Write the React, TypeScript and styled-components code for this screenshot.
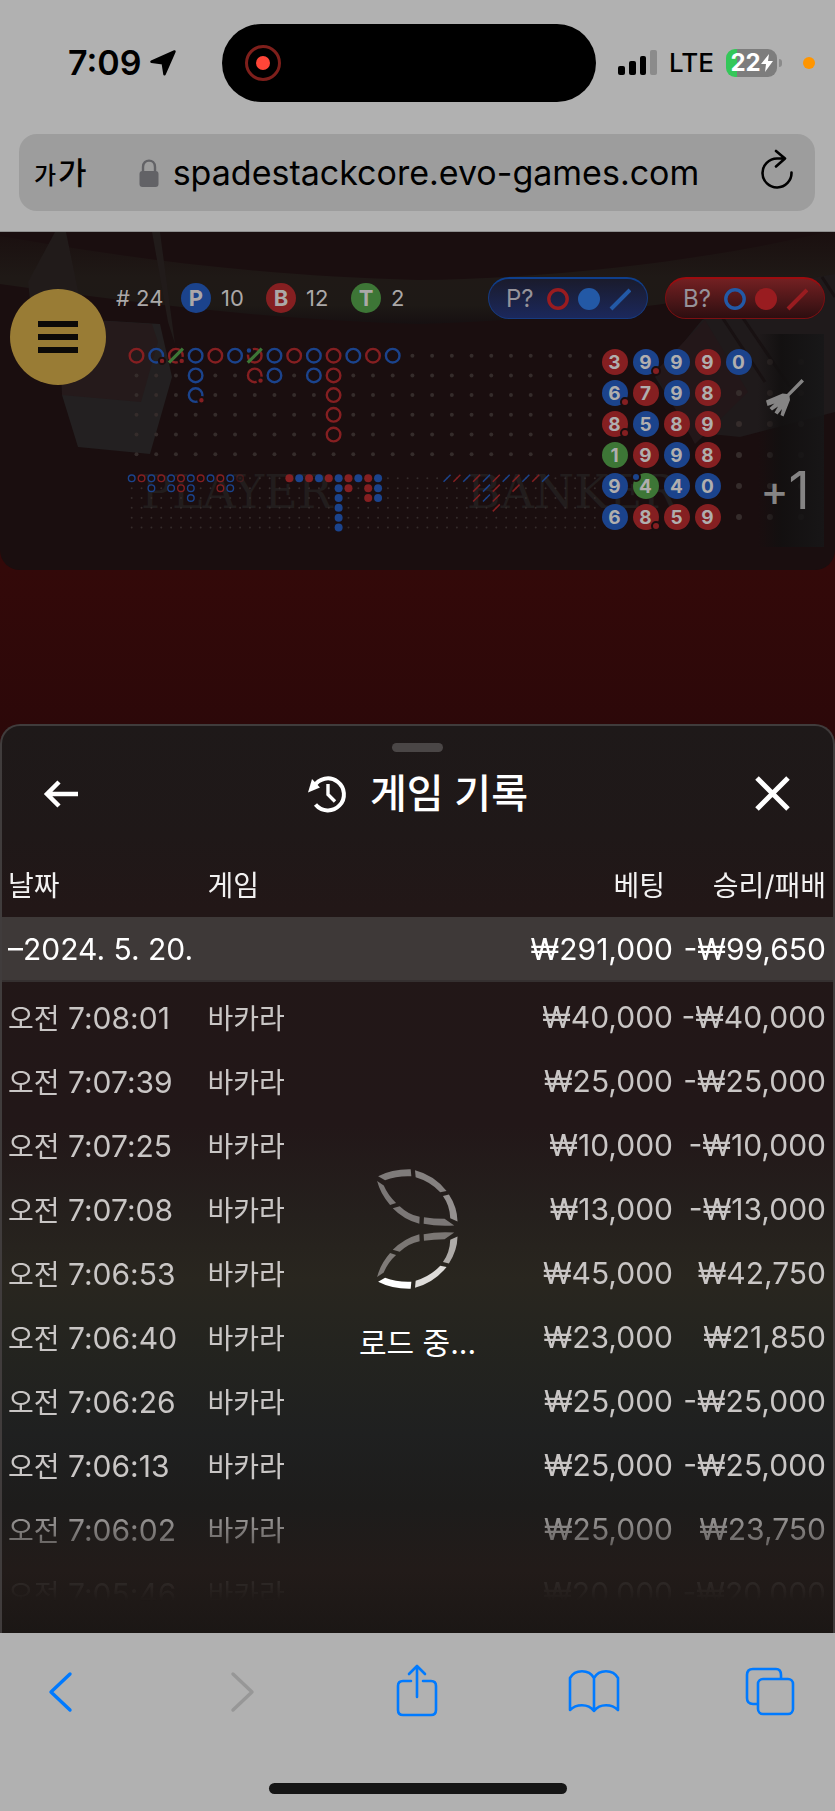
import React from 'react';
import styled, { createGlobalStyle } from 'styled-components';

const palette = {
  red: '#851f21',
  blue: '#1b438c',
  green: '#3d7636',
  dot: '#352c2b',
  chrome: '#b1b1b1',
  ios: '#007aff',
};

type Tone = 'red' | 'blue' | 'green';

const GlobalStyle = createGlobalStyle`
  * { box-sizing: border-box; }
  body {
    margin: 0;
    background: #1a0e0f;
    font-family: Inter, "Noto Sans CJK KR", sans-serif;
  }
  button {
    border: 0;
    padding: 0;
    background: none;
    color: inherit;
    font: inherit;
    cursor: pointer;
  }
`;

const Page = styled.div`
  display: flex;
  flex-direction: column;
  height: 100vh;
  min-height: 1200px;
  overflow: hidden;
`;

/* ---------- Browser chrome ---------- */

const BrowserTop = styled.header`
  background: ${palette.chrome};
  padding: 24px 20px 20px 19px;
  border-bottom: 1px solid #8f8f8f;
`;

const StatusBar = styled.div`
  display: grid;
  grid-template-columns: 1fr 374px 1fr;
  align-items: center;
  height: 78px;
`;

const Clock = styled.div`
  display: flex;
  align-items: center;
  gap: 8px;
  padding-left: 49px;
  font-size: 34px;
  font-weight: 600;
  line-height: 40px;
  color: #000;
`;

const Island = styled.div`
  display: flex;
  align-items: center;
  height: 78px;
  padding-left: 23px;
  border-radius: 39px;
  background: #000;
`;

const Recording = styled.span`
  width: 36px;
  height: 36px;
  border: 3px solid #7e1f1b;
  border-radius: 50%;
  display: grid;
  place-items: center;
  &::after {
    content: '';
    width: 14px;
    height: 14px;
    border-radius: 50%;
    background: #ff4538;
  }
`;

const Radios = styled.div`
  display: flex;
  align-items: center;
  gap: 12px;
  padding-left: 22px;
  font-size: 26px;
  font-weight: 500;
  line-height: 32px;
  color: #000;
`;

const Battery = styled.span`
  position: relative;
  display: flex;
  align-items: center;
  justify-content: center;
  width: 51px;
  height: 28px;
  border-radius: 9px;
  background: linear-gradient(90deg, #34c759 11px, #7d7d7d 11px);
  color: #fff;
  font-size: 24px;
  font-weight: 700;
  line-height: 28px;
  &::after {
    content: '';
    position: absolute;
    right: -5px;
    top: 10px;
    width: 3px;
    height: 8px;
    border-radius: 0 3px 3px 0;
    background: #8a8a8a;
  }
`;

const MicDot = styled.span`
  width: 12px;
  height: 12px;
  margin-left: 14px;
  border-radius: 50%;
  background: #ff9500;
`;

const AddressBar = styled.div`
  display: flex;
  align-items: center;
  height: 77px;
  margin-top: 32px;
  padding: 0 20px 0 15px;
  border-radius: 18px;
  background: #9d9d9d;
`;

const TextSizeButton = styled.button`
  display: flex;
  align-items: baseline;
  gap: 2px;
  margin-right: 52px;
  color: #000;
  font-family: "Noto Sans CJK KR", sans-serif;
  font-size: 31px;
  font-weight: 500;
  line-height: 40px;
  small { font-size: 24px; }
`;

const UrlInput = styled.input`
  flex: 1;
  min-width: 0;
  margin-left: 14px;
  padding: 0;
  border: 0;
  outline: 0;
  background: none;
  color: #000;
  font-family: Inter, sans-serif;
  font-size: 34px;
  line-height: 44px;
`;

const BrowserBottom = styled.footer`
  display: flex;
  flex-direction: column;
  align-items: center;
  justify-content: space-between;
  height: 178px;
  padding: 26px 0 17px;
  background: ${palette.chrome};
`;

const Toolbar = styled.nav`
  display: flex;
  justify-content: space-between;
  width: 100%;
  padding: 0 33px 0 28px;
`;

const ToolButton = styled.button`
  width: 64px;
  height: 64px;
  color: ${palette.ios};
  &:disabled { color: #979797; }
  svg { display: block; }
`;

const HomeBar = styled.div`
  width: 298px;
  height: 11px;
  border-radius: 6px;
  background: #151515;
`;

/* ---------- Game table ---------- */

const Stage = styled.main`
  flex: 1;
  min-height: 0;
  display: flex;
  flex-direction: column;
  background: linear-gradient(#330909 338px, #2c0809 500px);
`;

const Board = styled.section`
  position: relative;
  height: 338px;
  flex: none;
  padding: 45px 10px 0 0;
  border-radius: 0 0 20px 20px;
  background: #1a0e0f;
  overflow: hidden;
`;

const BoardBackdrop = styled.svg`
  position: absolute;
  inset: 0;
  width: 100%;
  height: 100%;
`;

const MenuButton = styled.button`
  position: absolute;
  left: 10px;
  top: 57px;
  width: 96px;
  height: 96px;
  display: flex;
  flex-direction: column;
  align-items: center;
  justify-content: center;
  gap: 7px;
  border-radius: 50%;
  background: #997c35;
  i {
    width: 40px;
    height: 6px;
    background: #0c0a08;
  }
`;

const BoardTop = styled.div`
  position: relative;
  display: flex;
  align-items: center;
  gap: 17px;
  padding-left: 116px;
  height: 42px;
`;

const Tally = styled.div`
  display: flex;
  align-items: center;
  flex: 1;
  color: #aba8a8;
  font-size: 22px;
  line-height: 30px;
`;

const TallyItem = styled.span`
  display: flex;
  align-items: center;
  gap: 10px;
  width: 85px;
`;

const TallyTotal = styled.span`
  width: 65px;
`;

const TallyMark = styled.b<{ $tone: Tone }>`
  width: 30px;
  height: 30px;
  border-radius: 50%;
  background: ${(p) => palette[p.$tone]};
  text-align: center;
  font-weight: 700;
`;

const Forecast = styled.button<{ $tone: 'red' | 'blue' }>`
  display: flex;
  align-items: center;
  justify-content: space-between;
  width: 160px;
  height: 42px;
  padding: 0 16px 0 17px;
  border: 1px solid ${(p) => (p.$tone === 'blue' ? '#163b80' : '#7d0f12')};
  border-top: 2px solid ${(p) => (p.$tone === 'blue' ? '#0f3f8c' : '#9c0c0f')};
  border-radius: 21px;
  background: ${(p) =>
    p.$tone === 'blue'
      ? 'linear-gradient(#1a1b2c, #1b285c)'
      : 'linear-gradient(#732022, #2d0e10)'};
  color: #96939a;
  font-size: 24px;
  line-height: 30px;
`;

const BoardBody = styled.div`
  position: relative;
  display: grid;
  grid-template-columns: 1fr 217px;
  align-items: start;
  margin: 25px 9px 0 126px;
  svg { display: block; width: 100%; }
`;

const BeadPlate = styled.div`
  display: grid;
  grid-template-columns: repeat(7, 31px);
  grid-auto-rows: 31px;
  place-items: center;
  padding-top: 2px;
`;

const Bead = styled.span<{ $tone: Tone }>`
  position: relative;
  width: 26px;
  height: 26px;
  border-radius: 50%;
  background: ${(p) => palette[p.$tone]};
  color: #b0aeae;
  font-size: 19px;
  font-weight: 700;
  line-height: 27px;
  text-align: center;
`;

const PairMark = styled.i<{ $tone: 'red' | 'blue' }>`
  position: absolute;
  ${(p) => (p.$tone === 'red' ? 'right: -2px; bottom: -1px;' : 'left: -2px; top: -1px;')}
  width: 10px;
  height: 10px;
  border: 2px solid #1a0e0f;
  border-radius: 50%;
  background: ${(p) => palette[p.$tone]};
`;

const EmptyBead = styled.span`
  width: 6px;
  height: 6px;
  border-radius: 50%;
  background: ${palette.dot};
`;

const SideTools = styled.div`
  position: absolute;
  right: 11px;
  top: 102px;
  width: 66px;
  height: 213px;
  display: flex;
  flex-direction: column;
  justify-content: space-between;
  align-items: center;
  padding: 44px 12px 32px 0;
  background: linear-gradient(90deg, rgba(18, 15, 15, 0), rgba(18, 16, 16, 0.9) 35%, rgba(23, 23, 24, 0.85));
  color: #858484;
`;

const PlusOne = styled.button`
  display: flex;
  align-items: center;
  font-size: 52px;
  line-height: 48px;
  span { font-size: 42px; font-weight: 500; }
`;

/* ---------- History sheet ---------- */

const Sheet = styled.section`
  flex: 1;
  min-height: 0;
  display: flex;
  flex-direction: column;
  margin-top: 154px;
  padding-bottom: 32px;
  border: 2px solid #403c3c;
  border-bottom: 0;
  border-radius: 20px 20px 0 0;
  background: linear-gradient(
    #1e1919 0%, #1f1818 12%, #221717 20%, #221718 44%, #25201d 54%,
    #29261f 61%, #24241f 68%, #1f2020 78%, #1d1c1b 86%, #221b19 93%, #1b1715 100%
  );
`;

const Grip = styled.div`
  width: 51px;
  height: 9px;
  margin: 17px auto 0;
  border-radius: 5px;
  background: #4a4646;
`;

const SheetHeader = styled.header`
  display: flex;
  align-items: center;
  justify-content: space-between;
  padding: 0 28px;
  margin: 10px 0 25px;
  color: #fff;
`;

const IconButton = styled.button`
  width: 64px;
  height: 64px;
  svg { display: block; }
`;

const SheetTitle = styled.h1`
  display: flex;
  align-items: center;
  gap: 23px;
  margin: 0;
  font-size: 40px;
  font-weight: 500;
  line-height: 64px;
`;

const HistoryArea = styled.div`
  position: relative;
  flex: 1;
  min-height: 0;
`;

const HistoryScroll = styled.div`
  height: 100%;
  overflow: hidden;
  mask-image: linear-gradient(#000 calc(100% - 110px), rgba(0, 0, 0, 0.12) calc(100% - 28px), transparent);
`;

const HistoryTable = styled.table`
  width: 100%;
  border-collapse: collapse;
  table-layout: fixed;
  color: #c9c6c5;
  font-size: 30px;
  line-height: 40px;
  white-space: nowrap;
`;

const Cell = styled.td<{ $right?: boolean }>`
  height: 64px;
  padding: ${(p) => (p.$right ? '0 7px 0 0' : '0 0 0 6px')};
  text-align: ${(p) => (p.$right ? 'right' : 'left')};
  font-weight: 400;
`;

const HeadCell = styled(Cell)`
  height: 66px;
  padding-top: 3px;
  color: #f2f1f1;
  font-size: 28px;
  &:nth-child(3) { padding-right: 15px; }
`;

const SummaryRow = styled.tr`
  background: #3e3938;
  border-bottom: 2px solid #353030;
  color: #fff;
`;

const Spacer = styled.tr`
  height: 4px;
`;

const Ko = styled.span`
  font-family: "Noto Sans CJK KR", sans-serif;
  font-size: 28px;
`;

const Loading = styled.div`
  position: absolute;
  inset: 0;
  display: flex;
  flex-direction: column;
  align-items: center;
  justify-content: center;
  gap: 34px;
  padding-top: 80px;
  color: #fff;
  font-size: 30px;
  line-height: 40px;
  pointer-events: none;
`;

/* ---------- Road charts ---------- */

const PITCH = 473 / 24;
const SMALL = PITCH / 2;

type RoadItem = { tone: 'red' | 'blue'; tie?: boolean; bankerPair?: boolean; playerPair?: boolean };
const R: RoadItem = { tone: 'red' };
const B: RoadItem = { tone: 'blue' };

const bigRoad: RoadItem[][] = [
  [R], [{ ...B, bankerPair: true }], [{ ...R, tie: true, bankerPair: true }],
  [B, B, { ...B, bankerPair: true }], [R], [B],
  [{ ...R, tie: true, playerPair: true }, { ...R, bankerPair: true }],
  [B, B], [R], [B, B], [R, R, R, R, R], [B], [R], [B],
];

const smallRoads: { kind: 'ring' | 'disc' | 'slash'; start: number; columns: string[] }[] = [
  { kind: 'ring', start: 0, columns: ['b', 'r', 'bb', 'r', 'bb', 'rr', 'bbb', 'r', 'b', 'rr', 'bb', 'f'] },
  { kind: 'disc', start: 16, columns: ['r', 'b', 'r', 'b', 'r', 'bbbbbb', 'rr', 'b', 'rrr', 'bbb'] },
  { kind: 'slash', start: 32, columns: ['b', 'r', 'b', 'rrr', 'bbb', 'rrrr', 'b', 'rr', 'b', 'r', 'b'] },
];

const range = (n: number) => Array.from({ length: n }, (_, i) => i);

function Roads() {
  return (
    <svg viewBox="0 0 473 206" role="img" aria-label="Roads">
      {range(24).map((c) =>
        range(6).map((r) => {
          const x = c * PITCH + 10.5;
          const y = r * PITCH + 11.7;
          const item = bigRoad[c]?.[r];
          if (!item) return <circle key={`${c}-${r}`} cx={x} cy={y} r={2} fill={palette.dot} />;
          return (
            <g key={`${c}-${r}`}>
              <circle cx={x} cy={y} r={6.8} fill="none" stroke={palette[item.tone]} strokeWidth={2.4} />
              {item.bankerPair && (
                <circle cx={x + 5.8} cy={y + 5.2} r={3.2} fill={palette.red} stroke="#1a0e0f" strokeWidth={2} />
              )}
              {item.playerPair && (
                <circle cx={x - 5.8} cy={y - 5.2} r={3.2} fill={palette.blue} stroke="#1a0e0f" strokeWidth={2} />
              )}
              {item.tie && (
                <path d={`M${x - 7} ${y + 7}L${x + 7} ${y - 7}`} stroke={palette.green} strokeWidth={3.2} />
              )}
            </g>
          );
        }),
      )}
      {range(48).map((c) =>
        range(6).map((r) => (
          <circle key={`s${c}-${r}`} cx={c * SMALL + 5.7} cy={r * SMALL + 134.3} r={1} fill={palette.dot} />
        )),
      )}
      {smallRoads.map((road) =>
        road.columns.map((column, i) =>
          column.split('').map((mark, r) => {
            const x = (road.start + i) * SMALL + 5.7;
            const y = r * SMALL + 134.3;
            const color = mark === 'b' ? palette.blue : palette.red;
            const key = `${road.kind}-${i}-${r}`;
            if (road.kind === 'ring')
              return (
                <circle key={key} cx={x} cy={y} r={3.3} fill="#1a0e0f" stroke={color} strokeWidth={1.4} opacity={mark === 'f' ? 0.35 : 1} />
              );
            if (road.kind === 'disc') return <circle key={key} cx={x} cy={y} r={4} fill={color} />;
            return <path key={key} d={`M${x - 3.5} ${y + 3.5}L${x + 3.5} ${y - 3.5}`} stroke={color} strokeWidth={1.5} />;
          }),
        ),
      )}
    </svg>
  );
}

type BeadData = [string, Tone, ('red' | 'blue')?];
const beads: BeadData[][] = [
  [['3', 'red'], ['9', 'blue', 'red'], ['9', 'blue'], ['9', 'red'], ['0', 'blue']],
  [['6', 'blue', 'red'], ['7', 'red'], ['9', 'blue'], ['8', 'red']],
  [['8', 'red', 'red'], ['5', 'blue'], ['8', 'red'], ['9', 'red']],
  [['1', 'green'], ['9', 'red'], ['9', 'blue'], ['8', 'red']],
  [['9', 'blue'], ['4', 'green', 'blue'], ['4', 'blue'], ['0', 'blue']],
  [['6', 'blue'], ['8', 'red', 'red'], ['5', 'red'], ['9', 'red']],
];

function Backdrop() {
  return (
    <BoardBackdrop viewBox="0 0 835 338" preserveAspectRatio="none" aria-hidden="true">
      <defs>
        <linearGradient id="rail" x1="0" y1="0" x2="0" y2="1">
          <stop offset="0" stopColor="#1a0f0f" />
          <stop offset="0.5" stopColor="#1f1916" />
          <stop offset="0.8" stopColor="#1e1916" />
          <stop offset="1" stopColor="#161011" />
        </linearGradient>
      </defs>
      <path d="M0 4C150 30 270 44 418 48C570 46 720 26 835 -2V44C720 66 570 88 418 92C270 88 130 70 0 52Z" fill="url(#rail)" />
      <path d="M28 50L55 0H66L80 68H30ZM152 0H160L175 112L168 90Z" fill="#211b1a" />
      <path d="M60 86L160 92L172 145L150 222L78 215L62 163Z" fill="#232021" />
      <path d="M60 86L152 92L158 110L141 170L62 163Z" fill="#251a1b" />
      <path d="M702 88L800 48L835 42V180L740 205L690 200L655 145Z" fill="#1f1a1b" />
      <path d="M705 88L748 160L695 212L655 140Z" fill="#231719" />
      <path d="M716 76L765 150M732 70L790 155M822 45L835 65" stroke="#181112" strokeWidth="3" />
      <g fill="#221d1d" fontFamily="DejaVu Serif, serif" fontSize="46">
        <text x="141" y="276">PLAYER</text>
        <text x="467" y="276">BANKER</text>
      </g>
    </BoardBackdrop>
  );
}

function ForecastPill({ tone, label }: { tone: 'red' | 'blue'; label: string }) {
  const own = tone === 'blue' ? '#2359a6' : '#991c20';
  const other = tone === 'blue' ? '#991c20' : '#2359a6';
  return (
    <Forecast $tone={tone}>
      {label}
      <svg width="84" height="24" viewBox="0 0 84 24">
        <circle cx="11" cy="12" r="9.2" fill="none" stroke={other} strokeWidth="3.4" />
        <circle cx="42" cy="12" r="11" fill={own} />
        <path d="M64 22L83 3" stroke={own} strokeWidth="4" />
      </svg>
    </Forecast>
  );
}

const rounds = [
  ['7:08:01', '₩40,000', '-₩40,000'],
  ['7:07:39', '₩25,000', '-₩25,000'],
  ['7:07:25', '₩10,000', '-₩10,000'],
  ['7:07:08', '₩13,000', '-₩13,000'],
  ['7:06:53', '₩45,000', '₩42,750'],
  ['7:06:40', '₩23,000', '₩21,850'],
  ['7:06:26', '₩25,000', '-₩25,000'],
  ['7:06:13', '₩25,000', '-₩25,000'],
  ['7:06:02', '₩25,000', '₩23,750'],
  ['7:05:46', '₩20,000', '-₩20,000'],
];

const petals = [
  'M3 22Q45 0 101 1L103 22Q60 20 24 34Z',
  'M114 4Q170 18 209 66L190 70Q160 38 116 25Z',
  'M198 81L216 77Q241 115 242 158L220 148Q219 110 198 81Z',
  'M0 36L20 50Q33 80 57 102L39 108Q10 75 0 36Z',
  'M47 118L68 112Q95 138 128 144L127 165Q80 152 47 118Z',
  'M141 145Q170 150 203 150L232 170Q180 173 140 165Z',
];
const upperShades = ['#7f7b7a', '#858180', '#959190', '#7b7776', '#7b7776', '#7b7776'];
const lowerShades = ['#ffffff', '#dedcd9', '#aeaba8', '#7f7b78', '#7b7774', '#7b7774'];

function Spinner() {
  return (
    <svg width="81" height="120" viewBox="0 0 243 361" aria-hidden="true">
      {petals.map((d, i) => <path key={`u${i}`} d={d} fill={upperShades[i]} />)}
      <g transform="matrix(1 0 0 -1 0 361)">
        {petals.map((d, i) => <path key={`l${i}`} d={d} fill={lowerShades[i]} />)}
      </g>
    </svg>
  );
}

export default function App() {
  return (
    <Page>
      <GlobalStyle />
      <BrowserTop>
        <StatusBar>
          <Clock>
            7:09
            <svg width="28" height="28" viewBox="0 0 28 28" aria-hidden="true">
              <path d="M25.500 2.500L2.500 12.700L13.800 14.200L15.500 25.200Z" fill="#000" stroke="#000" strokeWidth="2.500" strokeLinejoin="round" />
            </svg>
          </Clock>
          <Island><Recording /></Island>
          <Radios>
            <svg width="39" height="26" viewBox="0 0 39 26" aria-hidden="true">
              <rect x="0" y="16" width="7" height="9" rx="2" />
              <rect x="11" y="11" width="7" height="14" rx="2" />
              <rect x="22" y="6" width="6" height="19" rx="2" />
              <rect x="32" y="0" width="7" height="25" rx="2" fill="#8b8b8b" />
            </svg>
            LTE
            <Battery>
              22
              <svg width="12" height="18" viewBox="0 0 12 18" aria-hidden="true">
                <path d="M8 0L0 10H5L4 18L12 7H7Z" fill="#fff" />
              </svg>
            </Battery>
            <MicDot />
          </Radios>
        </StatusBar>
        <AddressBar>
          <TextSizeButton aria-label="가가"><small>가</small>가</TextSizeButton>
          <svg width="20" height="28" viewBox="0 0 20 28" aria-hidden="true">
            <path d="M4 13V8C4 -0.500 16 -0.500 16 8V13" fill="none" stroke="#626266" strokeWidth="2.400" />
            <rect x="0.500" y="12" width="19" height="16" rx="3" fill="#626266" />
          </svg>
          <UrlInput aria-label="URL" readOnly value="spadestackcore.evo-games.com" />
          <button aria-label="Reload">
            <svg width="36" height="44" viewBox="0 0 36 44" fill="none" stroke="#000" strokeWidth="2.600" strokeLinecap="round" strokeLinejoin="round">
              <path d="M32.500 23.500A14.500 14.500 0 1 1 18 9.500H25M17 2L26 9.500L17 17.500" />
            </svg>
          </button>
        </AddressBar>
      </BrowserTop>

      <Stage>
        <Board>
          <Backdrop />
          <BoardTop>
            <Tally>
              <TallyTotal># 24</TallyTotal>
              <TallyItem><TallyMark $tone="blue">P</TallyMark>10</TallyItem>
              <TallyItem><TallyMark $tone="red">B</TallyMark>12</TallyItem>
              <TallyItem><TallyMark $tone="green">T</TallyMark>2</TallyItem>
            </Tally>
            <ForecastPill tone="blue" label="P?" />
            <ForecastPill tone="red" label="B?" />
          </BoardTop>
          <BoardBody>
            <Roads />
            <BeadPlate>
              {beads.map((row, r) =>
                range(7).map((c) => {
                  const bead = row[c];
                  if (!bead) return <EmptyBead key={`${r}-${c}`} />;
                  return (
                    <Bead key={`${r}-${c}`} $tone={bead[1]}>
                      {bead[0]}
                      {bead[2] && <PairMark $tone={bead[2]} />}
                    </Bead>
                  );
                }),
              )}
            </BeadPlate>
          </BoardBody>
          <SideTools>
            <button aria-label="Clear">
              <svg width="40" height="40" viewBox="0 0 40 40" fill="#858484">
                <path d="M36.500 1L39 3.500L24.500 18L25 22L18.500 38.500L15.500 37L17 31L12.500 36.500L9.500 34.500L13 28.500L7 32.500L4.500 30L9.500 25.500L2.500 28L1 22.500L17.500 15.500L22 16Z" />
              </svg>
            </button>
            <PlusOne><span>+</span>1</PlusOne>
          </SideTools>
          <MenuButton aria-label="Menu"><i /><i /><i /></MenuButton>
        </Board>

        <Sheet>
          <Grip />
          <SheetHeader>
            <IconButton aria-label="Back">
              <svg width="64" height="64" viewBox="0 0 64 64" fill="none" stroke="#fff" strokeWidth="4.500">
                <path d="M48 32H17M29 20L17 32L29 44" />
              </svg>
            </IconButton>
            <SheetTitle>
              <svg width="40" height="40" viewBox="0 0 40 40" fill="none" stroke="#fff" strokeWidth="4" aria-hidden="true">
                <path d="M7 12.500A16 16 0 1 1 8.500 30.500" />
                <path d="M21 10V20.500L28 27.500" strokeWidth="3.400" />
                <path d="M5 5L1 18.500L13 13.500Z" fill="#fff" stroke="none" />
              </svg>
              게임 기록
            </SheetTitle>
            <IconButton aria-label="Close">
              <svg width="64" height="64" viewBox="0 0 64 64" stroke="#fff" strokeWidth="5">
                <path d="M16 16L47 47M47 16L16 47" />
              </svg>
            </IconButton>
          </SheetHeader>
          <HistoryArea>
            <HistoryScroll>
              <HistoryTable>
                <colgroup>
                  <col style={{ width: '24%' }} />
                  <col style={{ width: '28%' }} />
                  <col />
                  <col style={{ width: '153px' }} />
                </colgroup>
                <thead>
                  <tr>
                    <HeadCell as="th" scope="col">날짜</HeadCell>
                    <HeadCell as="th" scope="col">게임</HeadCell>
                    <HeadCell as="th" scope="col" $right>베팅</HeadCell>
                    <HeadCell as="th" scope="col" $right>승리/패배</HeadCell>
                  </tr>
                </thead>
                <tbody>
                  <SummaryRow>
                    <Cell colSpan={2}>–2024. 5. 20.</Cell>
                    <Cell $right>₩291,000</Cell>
                    <Cell $right>-₩99,650</Cell>
                  </SummaryRow>
                  <Spacer />
                  {rounds.map(([time, bet, result]) => (
                    <tr key={time}>
                      <Cell><Ko>오전</Ko> {time}</Cell>
                      <Cell><Ko>바카라</Ko></Cell>
                      <Cell $right>{bet}</Cell>
                      <Cell $right>{result}</Cell>
                    </tr>
                  ))}
                </tbody>
              </HistoryTable>
            </HistoryScroll>
            <Loading role="status">
              <Spinner />
              로드 중...
            </Loading>
          </HistoryArea>
        </Sheet>
      </Stage>

      <BrowserBottom>
        <Toolbar>
          <ToolButton aria-label="Back">
            <svg width="64" height="64" viewBox="0 0 64 64" fill="none" stroke="currentColor" strokeWidth="3.400" strokeLinecap="round" strokeLinejoin="round">
              <path d="M42 15L23 33L42 51" />
            </svg>
          </ToolButton>
          <ToolButton aria-label="Forward" disabled>
            <svg width="64" height="64" viewBox="0 0 64 64" fill="none" stroke="currentColor" strokeWidth="3.400" strokeLinecap="round" strokeLinejoin="round">
              <path d="M27 15L46 33L27 51" />
            </svg>
          </ToolButton>
          <ToolButton aria-label="Share">
            <svg width="64" height="64" viewBox="0 0 64 64" fill="none" stroke="currentColor" strokeWidth="2.600" strokeLinecap="round" strokeLinejoin="round">
              <path d="M28 22H20Q15 22 15 27V51Q15 56 20 56H48Q53 56 53 51V27Q53 22 48 22H40M34 38V7M26 15L34 7L42 15" />
            </svg>
          </ToolButton>
          <ToolButton aria-label="Bookmarks">
            <svg width="64" height="64" viewBox="0 0 64 64" fill="none" stroke="currentColor" strokeWidth="2.600" strokeLinecap="round" strokeLinejoin="round">
              <path d="M33 19C28 10 14 10 9 19V51C15 45 27 44 33 52C39 44 51 45 57 51V19C52 10 38 10 33 19V52" />
            </svg>
          </ToolButton>
          <ToolButton aria-label="Tabs">
            <svg width="64" height="64" viewBox="0 0 64 64" fill="none" stroke="currentColor" strokeWidth="2.600" strokeLinecap="round" strokeLinejoin="round">
              <rect x="20" y="20" width="35" height="35" rx="5" />
              <path d="M19 45H15Q9 45 9 39V16Q9 10 15 10H38Q43 10 43 16V19" />
            </svg>
          </ToolButton>
        </Toolbar>
        <HomeBar />
      </BrowserBottom>
    </Page>
  );
}
